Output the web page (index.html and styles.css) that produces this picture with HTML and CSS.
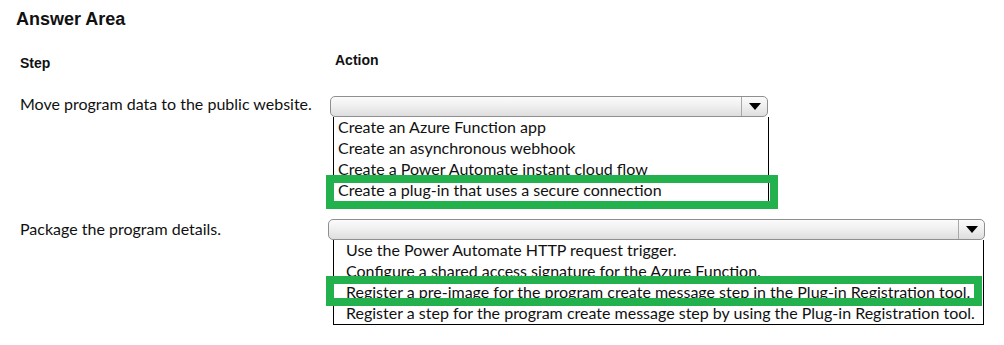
FILE: index.html
```html
<!DOCTYPE html>
<html>
<head>
<meta charset="utf-8">
<link rel="stylesheet" href="styles.css">
</head>
<body>
<div class="page">
  <h1 class="title">Answer Area</h1>
  <div class="row head">
    <div class="label step">Step</div>
    <div class="action">Action</div>
  </div>
  <div class="row row1">
    <div class="label">Move program data to the public website.</div>
    <div class="widget">
      <div class="select s1"><span class="arrow"></span></div>
      <ul class="list l1">
        <li>Create an Azure Function app</li>
        <li>Create an asynchronous webhook</li>
        <li>Create a Power Automate instant cloud flow</li>
        <li class="picked p1">Create a plug-in that uses a secure connection</li>
      </ul>
    </div>
  </div>
  <div class="row row2">
    <div class="label">Package the program details.</div>
    <div class="widget">
      <div class="select s2"><span class="arrow"></span></div>
      <ul class="list l2">
        <li>Use the Power Automate HTTP request trigger.</li>
        <li>Configure a shared access signature for the Azure Function.</li>
        <li class="picked p2">Register a pre-image for the program create message step in the Plug-in Registration tool.</li>
        <li>Register a step for the program create message step by using the Plug-in Registration tool.</li>
      </ul>
    </div>
  </div>
</div>
</body>
</html>
```
FILE: styles.css
```css
html, body { margin: 0; padding: 0; background: #fff; }
.page {
  padding: 8px 0 0 16px;
  font-family: Lato, "Liberation Sans", Arial, sans-serif;
  color: #111;
  font-size: 16px;
}
.title {
  margin: 0;
  font-family: "Liberation Sans", Arial, sans-serif;
  font-size: 18px;
  line-height: 22px;
  font-weight: bold;
}
.row { display: flex; margin-left: 4px; }
.label { width: 308px; flex: none; line-height: 20px; }
.head {
  margin-top: 22px;
  font-weight: bold;
  font-size: 14px;
  font-family: "Liberation Sans", Arial, sans-serif;
}
.step { padding-top: 1px; }
.action { line-height: 20px; margin-top: -2px; margin-left: 7px; }
.row1 { margin-top: 23px; }
.row1 .label { margin-top: -2px; }
.row2 { margin-top: 17px; }
.widget { display: flex; flex-direction: column; }
.select {
  box-sizing: border-box;
  height: 21px;
  border: 1px solid #8f8f8f;
  border-radius: 5px;
  background: linear-gradient(#fbfbfb 0%, #f0f0f0 45%, #dedede 100%);
  display: flex;
  justify-content: flex-end;
}
.s1 { width: 438px; margin-left: 2px; }
.s2 { width: 657px; }
.arrow {
  width: 25px;
  border-left: 1px solid #a8a8a8;
  display: flex;
  align-items: center;
  justify-content: center;
}
.arrow::before {
  content: "";
  border-left: 6px solid transparent;
  border-right: 6px solid transparent;
  border-top: 7px solid #000;
}
.list {
  list-style: none;
  margin: 0 0 0 5px;
  padding: 0;
  border: 1px solid #000;
  border-top: none;
  background: #fff;
}
.list li { height: 21px; line-height: 20px; white-space: nowrap; position: relative; }
.l1 { width: 434px; }
.l1 li { padding-left: 4px; }
.l2 { width: 649px; font-size: 16px; }
.l2 li { padding-left: 12px; }
.picked::after {
  content: "";
  position: absolute;
  box-sizing: border-box;
  border: 8px solid #22b14c;
  pointer-events: none;
}
.p1::after { left: -8px; right: -10px; top: -5px; bottom: -8px; }
.p2::after { left: -8px; right: 1px; top: -6px; bottom: -3px; }
```
